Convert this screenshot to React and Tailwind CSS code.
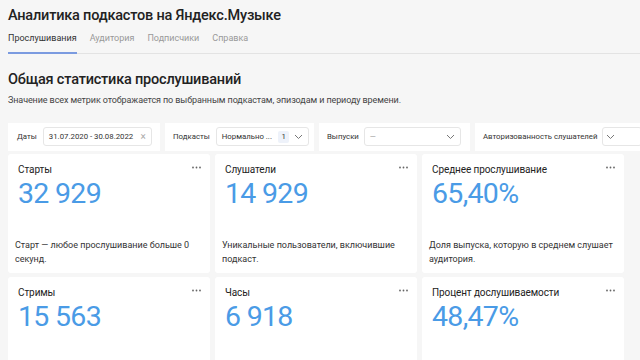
import React from 'react';

const font = { fontFamily: 'Roboto, "Liberation Sans", sans-serif' };

const Dots = () => (
  <svg width="9" height="3" viewBox="0 0 9 3" className="absolute right-[9px] top-[12px]">
    <circle cx="1" cy="1.5" r="0.9" fill="#666" />
    <circle cx="4.5" cy="1.5" r="0.9" fill="#666" />
    <circle cx="8" cy="1.5" r="0.9" fill="#666" />
  </svg>
);

const Chevron = ({ className = '' }) => (
  <svg width="9" height="6" viewBox="0 0 9 6" className={className}>
    <path d="M1 1l3.5 3.5L8 1" fill="none" stroke="#777" strokeWidth="1" />
  </svg>
);

const MetricCard = ({ title, value, desc }) => (
  <div className="relative bg-white rounded-[3px] h-[119px] pl-[10px] pt-[9px] flex flex-col">
    <Dots />
    <div className="text-[10px] leading-[14px] text-[#222] tracking-[-0.1px]">{title}</div>
    <div className="text-[28.5px] leading-[34px] text-[#4a9be6] tracking-[-0.7px]">{value}</div>
    {desc && <div className="mt-auto mb-[7px] ml-[-3px] text-[9px] leading-[14px] text-[#333] pr-[10px]">{desc}</div>}
  </div>
);

const metrics = [
  { title: 'Старты', value: '32 929', desc: 'Старт — любое прослушивание больше 0 секунд.' },
  { title: 'Слушатели', value: '14 929', desc: 'Уникальные пользователи, включившие подкаст.' },
  { title: 'Среднее прослушивание', value: '65,40%', desc: 'Доля выпуска, которую в среднем слушает аудитория.' },
  { title: 'Стримы', value: '15 563' },
  { title: 'Часы', value: '6 918' },
  { title: 'Процент дослушиваемости', value: '48,47%' },
];

export default function App() {
  return (
    <div className="w-[640px] h-[360px] overflow-hidden bg-[#f6f6f6]" style={font}>
      <div className="px-[8px] pt-[5px]">
        <h1 className="text-[14.5px] leading-[22px] text-[#222] font-medium tracking-[-0.2px]">Аналитика подкастов на Яндекс.Музыке</h1>
        <div className="flex gap-[13px] mt-[5px] text-[9px] border-b border-[#e3e3e3] mr-[-8px] whitespace-nowrap">
          <div className="text-[#333] pb-[6px] border-b-2 border-[#7b9be0] mb-[-1px]">Прослушивания</div>
          <div className="text-[#999] pb-[6px]">Аудитория</div>
          <div className="text-[#999] pb-[6px]">Подписчики</div>
          <div className="text-[#999] pb-[6px]">Справка</div>
        </div>
        <h2 className="mt-[16px] text-[14.5px] leading-[20px] text-[#222] font-medium tracking-[-0.2px]">Общая статистика прослушиваний</h2>
        <p className="mt-[3px] text-[9px] leading-[14px] text-[#444] whitespace-nowrap tracking-[-0.1px]">Значение всех метрик отображается по выбранным подкастам, эпизодам и периоду времени.</p>

        <div className="flex gap-[5px] mt-[16px] h-[28px] mr-[-8px] whitespace-nowrap">
          <div className="bg-white w-[152px] flex items-center pl-[9px] gap-[6px]">
            <span className="text-[7.8px] text-[#333]">Даты</span>
            <div className="w-[109px] h-[19px] border border-[#e6e6e6] rounded-[3px] flex items-center justify-between px-[5px]">
              <span className="text-[7.8px] text-[#333]">31.07.2020 - 30.08.2022</span>
              <span className="text-[10px] text-[#aaa] leading-none">×</span>
            </div>
          </div>
          <div className="bg-white w-[149px] flex items-center pl-[8px] gap-[6px]">
            <span className="text-[7.8px] text-[#333]">Подкасты</span>
            <div className="w-[93px] h-[19px] border border-[#e6e6e6] rounded-[3px] flex items-center px-[5px]">
              <span className="text-[7.8px] text-[#333]">Нормально ...</span>
              <span className="ml-auto bg-[#eef2fa] text-[7.8px] text-[#333] px-[3px] leading-[12px] rounded-[2px]">1</span>
              <Chevron className="ml-[5px]" />
            </div>
          </div>
          <div className="bg-white w-[151px] flex items-center pl-[8px] gap-[5px]">
            <span className="text-[7.8px] text-[#333]">Выпуски</span>
            <div className="w-[97px] h-[19px] border border-[#e6e6e6] rounded-[3px] flex items-center justify-between px-[5px]">
              <span className="text-[7.8px] text-[#999]">—</span>
              <Chevron />
            </div>
          </div>
          <div className="bg-white flex-1 flex items-center pl-[8px] gap-[5px] overflow-hidden">
            <span className="text-[7.8px] text-[#333]">Авторизованность слушателей</span>
            <div className="w-[40px] shrink-0 h-[19px] border border-[#e6e6e6] rounded-[3px] flex items-center px-[3px]">
              <Chevron />
            </div>
          </div>
        </div>

        <div className="grid grid-cols-[202px_202px_202px] gap-x-[5px] gap-y-[4px] mt-[3px]">
          {metrics.map((m) => (
            <MetricCard key={m.title} {...m} />
          ))}
        </div>
      </div>
    </div>
  );
}
